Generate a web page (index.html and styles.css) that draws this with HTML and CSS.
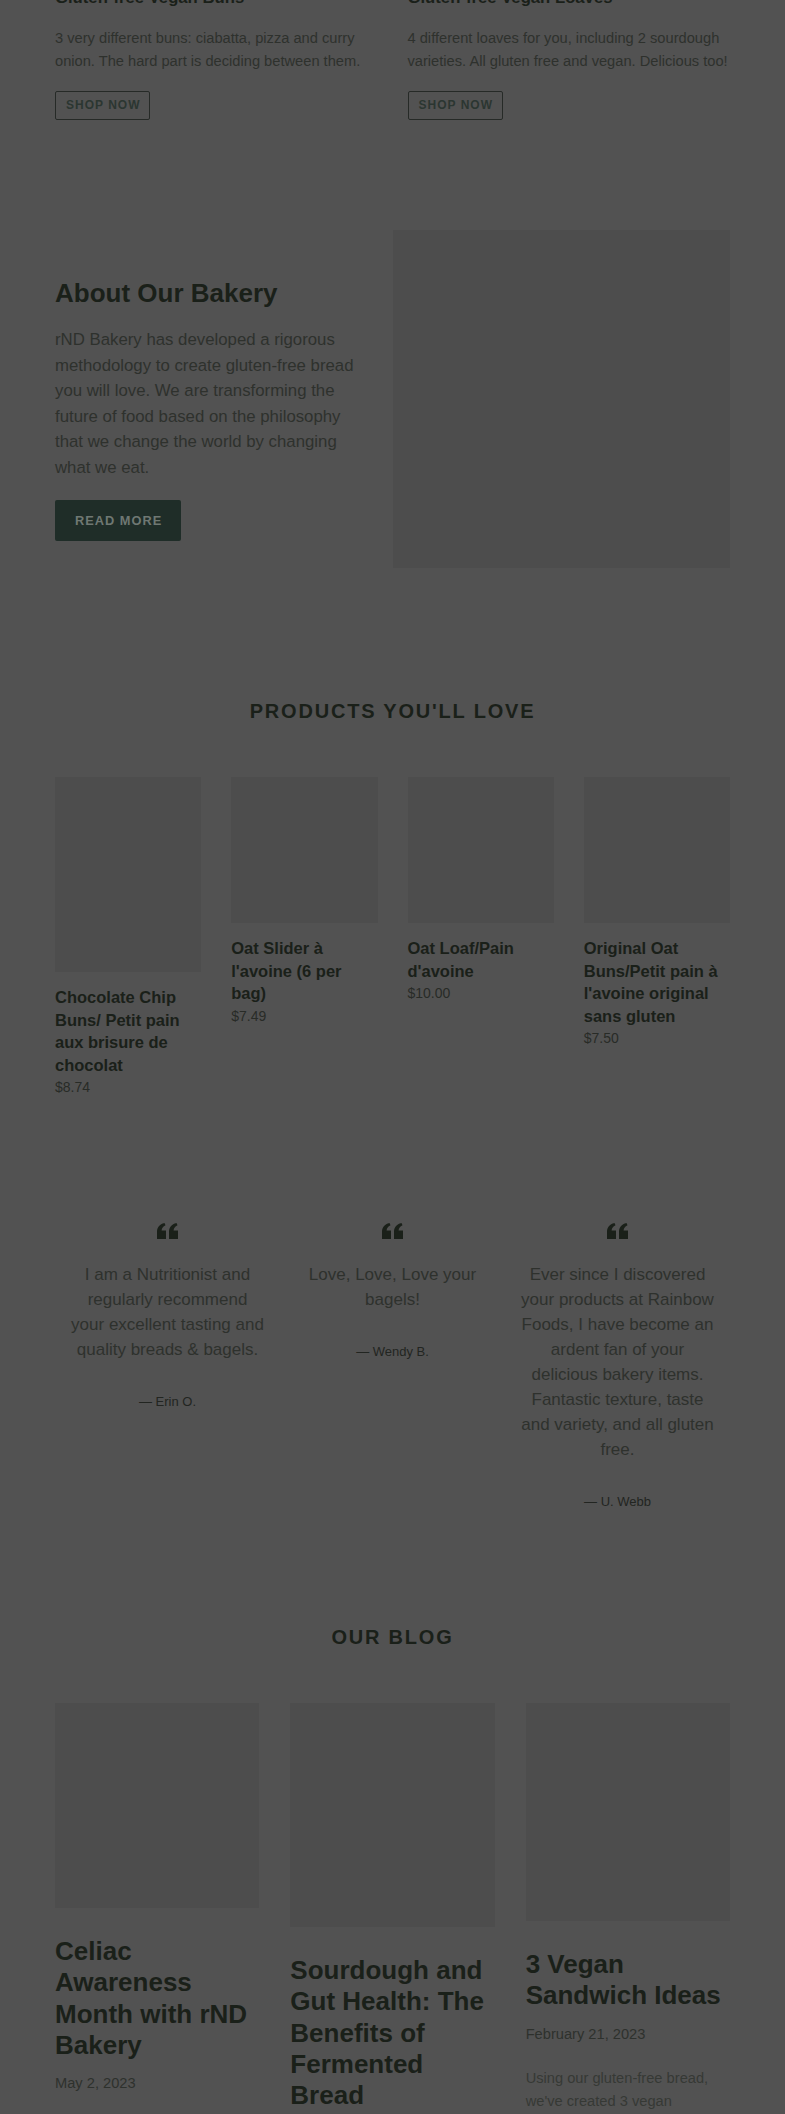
FILE: index.html
```html
<!DOCTYPE html>
<html lang="en">
<head>
    <meta charset="UTF-8">
    <meta name="viewport" content="width=device-width, initial-scale=1.0">
    <title>rND Bakery</title>
    <link rel="stylesheet" href="styles.css">
</head>
<body>

    <!-- Collections -->
    <div class="collections">
        <div class="collection">
            <h3 class="collection-title">Gluten-free Vegan Buns</h3>
            <p>3 very different buns: ciabatta, pizza and curry onion. The hard part is deciding between them.</p>
            <a class="btn-outline" href="#">Shop now</a>
        </div>
        <div class="collection">
            <h3 class="collection-title">Gluten-free Vegan Loaves</h3>
            <p>4 different loaves for you, including 2 sourdough varieties. All gluten free and vegan. Delicious too!</p>
            <a class="btn-outline" href="#">Shop now</a>
        </div>
    </div>

    <!-- About -->
    <div class="about">
        <div class="about-text">
            <h2>About Our Bakery</h2>
            <p>rND Bakery has developed a rigorous methodology to create gluten-free bread you will love. We are transforming the future of food based on the philosophy that we change the world by changing what we eat.</p>
            <a class="btn" href="#">Read more</a>
        </div>
        <div class="about-image placeholder"></div>
    </div>

    <!-- Products -->
    <div class="products">
        <h2 class="section-title">Products you'll love</h2>
        <div class="product-grid">
            <div class="product-card">
                <div class="placeholder product-img tall"></div>
                <h3>Chocolate Chip Buns/ Petit pain aux brisure de chocolat</h3>
                <p class="price">$8.74</p>
            </div>
            <div class="product-card">
                <div class="placeholder product-img"></div>
                <h3>Oat Slider à l'avoine (6 per bag)</h3>
                <p class="price">$7.49</p>
            </div>
            <div class="product-card">
                <div class="placeholder product-img"></div>
                <h3>Oat Loaf/Pain d'avoine</h3>
                <p class="price">$10.00</p>
            </div>
            <div class="product-card">
                <div class="placeholder product-img"></div>
                <h3>Original Oat Buns/Petit pain à l'avoine original sans gluten</h3>
                <p class="price">$7.50</p>
            </div>
        </div>
    </div>

    <!-- Testimonials -->
    <div class="testimonials">
        <div class="testimonial">
            <svg class="quote-icon" viewBox="0 0 21 16"><path d="M0 16V9C0 4.5 2.5 1.2 7.5 0l1 2.3C6 3.3 4.8 5.2 4.6 7.6H9V16Z M12 16V9C12 4.5 14.5 1.2 19.5 0l1 2.3C18 3.3 16.8 5.2 16.6 7.6H21V16Z"/></svg>
            <p>I am a Nutritionist and regularly recommend your excellent tasting and quality breads &amp; bagels.</p>
            <span class="author">— Erin O.</span>
        </div>
        <div class="testimonial">
            <svg class="quote-icon" viewBox="0 0 21 16"><path d="M0 16V9C0 4.5 2.5 1.2 7.5 0l1 2.3C6 3.3 4.8 5.2 4.6 7.6H9V16Z M12 16V9C12 4.5 14.5 1.2 19.5 0l1 2.3C18 3.3 16.8 5.2 16.6 7.6H21V16Z"/></svg>
            <p>Love, Love, Love your bagels!</p>
            <span class="author">— Wendy B.</span>
        </div>
        <div class="testimonial">
            <svg class="quote-icon" viewBox="0 0 21 16"><path d="M0 16V9C0 4.5 2.5 1.2 7.5 0l1 2.3C6 3.3 4.8 5.2 4.6 7.6H9V16Z M12 16V9C12 4.5 14.5 1.2 19.5 0l1 2.3C18 3.3 16.8 5.2 16.6 7.6H21V16Z"/></svg>
            <p>Ever since I discovered your products at Rainbow Foods, I have become an ardent fan of your delicious bakery items. Fantastic texture, taste and variety, and all gluten free.</p>
            <span class="author">— U. Webb</span>
        </div>
    </div>

    <!-- Blog -->
    <div class="blog">
        <h2 class="section-title">Our blog</h2>
        <div class="blog-grid">
            <div class="blog-card">
                <div class="placeholder blog-img"></div>
                <h3>Celiac Awareness Month with rND Bakery</h3>
                <p class="date">May 2, 2023</p>
            </div>
            <div class="blog-card">
                <div class="placeholder blog-img blog-img--tall"></div>
                <h3>Sourdough and Gut Health: The Benefits of Fermented Bread</h3>
                <p class="date">April 12, 2023</p>
            </div>
            <div class="blog-card">
                <div class="placeholder blog-img blog-img--mid"></div>
                <h3>3 Vegan Sandwich Ideas</h3>
                <p class="date">February 21, 2023</p>
                <p class="excerpt">Using our gluten-free bread, we've created 3 vegan sandwiches that are perfect for lunch.</p>
            </div>
        </div>
    </div>

</body>
</html>
```

FILE: styles.css
```css
/* Basic reset and page layout */
* {
    margin: 0;
    padding: 0;
    box-sizing: border-box;
}

body {
    font-family: "Liberation Sans", Arial, sans-serif;
    background-color: #525252;
    color: #2e312d;
    font-size: 14.67px;
    line-height: 23px;
}

h2, h3 {
    color: #1a2019;
}

.placeholder {
    background-color: #4d4d4d;
}

.section-title {
    text-align: center;
    text-transform: uppercase;
    font-size: 20px;
    line-height: 24px;
    letter-spacing: 1.8px;
}

/* Collections (top) */
.collections {
    display: grid;
    grid-template-columns: 1fr 1fr;
    gap: 30px;
    padding: 0 55px;
    margin-top: -13px;
}

.collection-title {
    font-size: 16.7px;
    line-height: 21.7px;
}

.collection p {
    margin-top: 18.3px;
    line-height: 22.5px;
}

.btn-outline {
    display: inline-block;
    margin-top: 19.3px;
    padding: 0 9px 0 10px;
    border: 1px solid #262a27;
    border-radius: 2px;
    color: #2b3631;
    font-size: 12px;
    font-weight: bold;
    line-height: 27px;
    letter-spacing: 1px;
    text-transform: uppercase;
    text-decoration: none;
}

/* About section */
.about {
    display: grid;
    grid-template-columns: 1fr 1fr;
    padding: 0 55px;
    margin-top: 110px;
}

.about-text {
    padding: 48px 30px 0 0;
}

.about h2 {
    font-size: 26px;
    line-height: 31.2px;
}

.about p {
    margin-top: 17.5px;
    font-size: 16.8px;
    line-height: 25.6px;
}

.btn {
    display: inline-block;
    margin-top: 19px;
    padding: 0 19px 0 20px;
    background-color: #1f2d28;
    color: #6f7873;
    border-radius: 2px;
    font-size: 12.8px;
    font-weight: bold;
    line-height: 41px;
    letter-spacing: 1px;
    text-transform: uppercase;
    text-decoration: none;
}

.about-image {
    aspect-ratio: 1 / 1;
}

/* Products */
.products {
    padding: 0 55px;
    margin-top: 131px;
}

.product-grid {
    display: grid;
    grid-template-columns: repeat(4, 1fr);
    gap: 30px;
    align-items: start;
    margin-top: 54.3px;
}

.product-img {
    aspect-ratio: 1 / 1;
}

.product-img.tall {
    aspect-ratio: 3 / 4;
}

.product-card h3 {
    margin-top: 14px;
    font-size: 16.5px;
    line-height: 22.5px;
}

.price {
    color: #282b27;
    font-size: 14px;
    line-height: 22px;
}

/* Testimonials */
.testimonials {
    display: grid;
    grid-template-columns: repeat(3, 1fr);
    padding: 0 55px;
    margin-top: 125.3px;
    text-align: center;
}

.testimonial {
    padding: 0 15px;
}

.quote-icon {
    display: block;
    width: 21px;
    height: 16px;
    margin: 0 auto;
    fill: #1a2019;
}

.testimonial p {
    margin-top: 23px;
    font-size: 17px;
    line-height: 25px;
}

.author {
    display: block;
    margin-top: 29.5px;
    color: #222521;
    font-size: 13px;
    line-height: 20px;
}

/* Blog */
.blog {
    padding: 0 55px;
    margin-top: 113px;
}

.blog-grid {
    display: grid;
    grid-template-columns: repeat(3, 1fr);
    gap: 31px;
    align-items: start;
    margin-top: 54.3px;
}

.blog-img {
    height: 205px;
}

.blog-img--tall {
    height: 224px;
}

.blog-img--mid {
    height: 218px;
}

.blog-card h3 {
    margin-top: 28px;
    font-size: 26px;
    line-height: 31.2px;
}

.date {
    margin-top: 11px;
}

.excerpt {
    margin-top: 21px;
    color: #363935;
}
```
